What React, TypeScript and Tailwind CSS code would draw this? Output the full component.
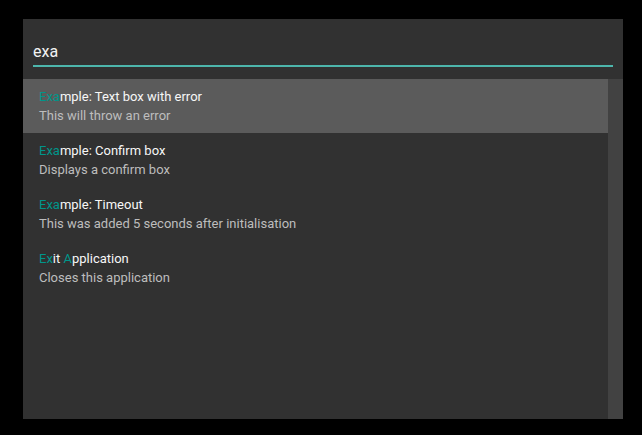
import React from 'react';

interface Item {
  title: React.ReactNode;
  desc: string;
}

const Hl = ({ children }: { children: React.ReactNode }) => (
  <span className="text-[#00968a]">{children}</span>
);

const items: Item[] = [
  { title: <><Hl>Exa</Hl>mple: Text box with error</>, desc: 'This will throw an error' },
  { title: <><Hl>Exa</Hl>mple: Confirm box</>, desc: 'Displays a confirm box' },
  { title: <><Hl>Exa</Hl>mple: Timeout</>, desc: 'This was added 5 seconds after initialisation' },
  { title: <><Hl>Ex</Hl>it <Hl>A</Hl>pplication</>, desc: 'Closes this application' },
];

export default function App() {
  return (
    <div className="w-[642px] h-[435px] bg-black pl-[23px] pr-[19px] pt-[19px] pb-[16px] font-['Roboto',sans-serif]">
      <div className="w-[600px] h-[400px] bg-[#313131] flex flex-col">
        <div className="px-[10px] pt-[18px] pb-[12px]">
          <input
            readOnly
            value="exa"
            className="w-full h-[30px] bg-transparent outline-none border-b-2 border-[#4db6ac] text-[16px] text-[#f2f2f2] px-0 leading-[28px]"
          />
        </div>
        <div className="flex-1 flex min-h-0">
          <div className="flex-1">
            {items.map((it, i) => (
              <div
                key={i}
                className={`pl-[16px] pt-[8px] pb-[8px] text-[13px] leading-[19px] ${i === 0 ? 'bg-[#5b5b5b]' : ''}`}
              >
                <div className="text-[#f7f7f7]">{it.title}</div>
                <div className="text-[#bdbdbd]">{it.desc}</div>
              </div>
            ))}
          </div>
          <div className="w-[15px] bg-[#424242]" />
        </div>
      </div>
    </div>
  );
}
